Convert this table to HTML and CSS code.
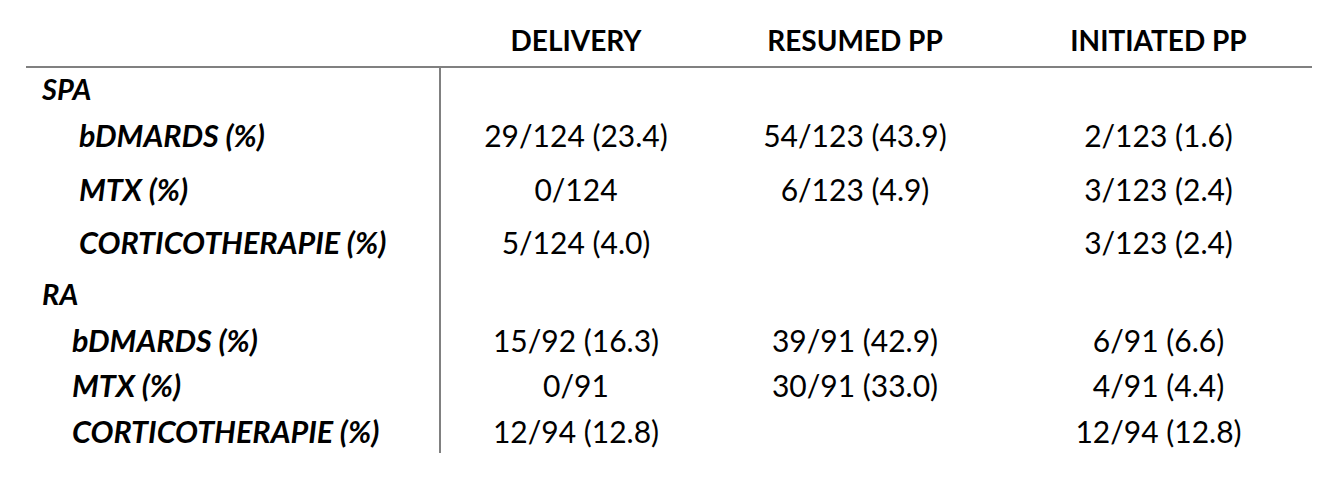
FILE: index.html
```html
<!DOCTYPE html>
<html>
<head>
<meta charset="utf-8">
<link rel="stylesheet" href="styles.css">
</head>
<body>
<div class="table">
  <div class="row head">
    <div class="label"></div>
    <div class="c c1">DELIVERY</div>
    <div class="c c2">RESUMED PP</div>
    <div class="c c3">INITIATED PP</div>
  </div>
  <div class="body">
    <div class="row r1"><div class="label group">SPA</div><div class="c c1"></div><div class="c c2"></div><div class="c c3"></div></div>
    <div class="row r2"><div class="label sub">bDMARDS (%)</div><div class="c c1">29/124 (23.4)</div><div class="c c2">54/123 (43.9)</div><div class="c c3">2/123 (1.6)</div></div>
    <div class="row r3"><div class="label sub">MTX (%)</div><div class="c c1">0/124</div><div class="c c2">6/123 (4.9)</div><div class="c c3">3/123 (2.4)</div></div>
    <div class="row r4"><div class="label sub">CORTICOTHERAPIE (%)</div><div class="c c1">5/124 (4.0)</div><div class="c c2"></div><div class="c c3">3/123 (2.4)</div></div>
    <div class="row r5"><div class="label group">RA</div><div class="c c1"></div><div class="c c2"></div><div class="c c3"></div></div>
    <div class="row r6 ra"><div class="label sub">bDMARDS (%)</div><div class="c c1">15/92 (16.3)</div><div class="c c2">39/91 (42.9)</div><div class="c c3">6/91 (6.6)</div></div>
    <div class="row r7 ra"><div class="label sub">MTX (%)</div><div class="c c1">0/91</div><div class="c c2">30/91 (33.0)</div><div class="c c3">4/91 (4.4)</div></div>
    <div class="row r8 ra"><div class="label sub">CORTICOTHERAPIE (%)</div><div class="c c1">12/94 (12.8)</div><div class="c c2"></div><div class="c c3">12/94 (12.8)</div></div>
  </div>
</div>
</body>
</html>
```
FILE: styles.css
```css
html, body {
  margin: 0;
  padding: 0;
  background: #ffffff;
}

body {
  font-family: Lato, "Open Sans", sans-serif;
  color: #000;
}

.table {
  margin-left: 26px;
  width: 1286px;
}

.row {
  display: grid;
  grid-template-columns: 415px 270px 258px 343px;
  align-items: center;
}

.head {
  align-items: end;
  border-bottom: 2px solid #808080;
  box-sizing: border-box;
  height: 68px;
}

.head .c {
  font-weight: 700;
  font-size: 28px;
  line-height: 32px;
  padding-bottom: 10px;
}

.c {
  text-align: center;
  font-size: 30px;
  line-height: 36px;
}

.body .c1 {
  border-left: 2px solid #808080;
  align-self: stretch;
  display: flex;
  align-items: center;
  justify-content: center;
  margin-left: -2px;
}

.c2 {
  padding-left: 30px;
}

.c3 {
  padding-left: 36px;
}

.label {
  font-weight: 700;
  font-style: italic;
}

.group {
  padding-left: 16px;
  font-size: 29px;
}

.sub {
  padding-left: 53px;
  font-size: 30.5px;
}

.ra .sub {
  padding-left: 46px;
}

.r1 { height: 40px; }
.r2 { height: 54px; }
.r3 { height: 54px; }
.r4 { height: 52px; }
.r5 { height: 50px; }
.r6 { height: 44px; }
.r7 { height: 46px; }
.r8 { height: 45px; }
```
